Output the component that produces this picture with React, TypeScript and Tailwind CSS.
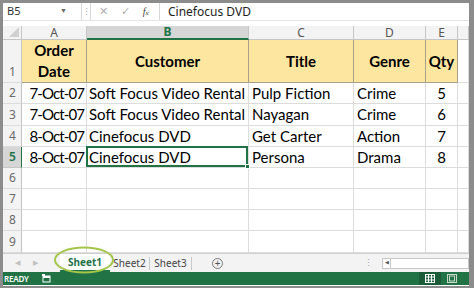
import React from "react";

const font = { fontFamily: "Lato, 'Open Sans', sans-serif" };
const ui = { fontFamily: "'Segoe UI', 'Noto Sans', 'Open Sans', sans-serif" };

const data = [
  ["7-Oct-07", "Soft Focus Video Rental", "Pulp Fiction", "Crime", "5"],
  ["7-Oct-07", "Soft Focus Video Rental", "Nayagan", "Crime", "6"],
  ["8-Oct-07", "Cinefocus DVD", "Get Carter", "Action", "7"],
  ["8-Oct-07", "Cinefocus DVD", "Persona", "Drama", "8"],
];

const cols = "grid-cols-[19px_65px_162px_105px_72px_32px_11px]";

function RowHead({ n, sel }: { n: number; sel?: boolean }) {
  return (
    <div
      className={
        "flex items-end pl-[6px] pb-[1px] text-[12px] border-r border-b " +
        (sel
          ? "bg-[#d6d6d6] text-[#217346] border-r-[#217346] border-b-[#c6c6c6] font-semibold"
          : "bg-[#f3f3f3] text-[#6a6a6a] border-r-[#c6c6c6] border-b-[#dcdcdc]")
      }
      style={ui}
    >
      {n}
    </div>
  );
}

export default function App() {
  return (
    <div className="w-[474px] h-[288px] bg-[#8c8c8c] pt-[3px] pl-[3px] pr-[5px] pb-[2px] overflow-hidden">
      <div className="w-[466px] h-[283px] bg-white flex flex-col">
        {/* Formula bar */}
        <div className="h-[18px] flex items-stretch bg-white border-b border-[#e4e4e4] text-[11px] text-[#333]" style={ui}>
          <div className="w-[79px] flex items-center justify-between pl-[4px] pr-[14px] border-r border-[#d8d8d8]">
            <span>B5</span>
            <span className="text-[7px] text-[#666]">▼</span>
          </div>
          <div className="w-[8px] flex items-center justify-center text-[#aaa] text-[9px]">⋮</div>
          <div className="w-[70px] flex items-center justify-around border-l border-r border-[#d8d8d8] text-[#b0b0b0] pl-[2px] pr-[4px]">
            <span className="text-[11px]">✕</span>
            <span className="text-[11px]">✓</span>
            <span className="italic text-[#444] text-[10px]" style={{ fontFamily: "'Liberation Serif', serif" }}>
              f<span className="text-[7px]">x</span>
            </span>
          </div>
          <div className="flex-1 flex items-center pl-[8px] text-[12px] text-[#222]">Cinefocus DVD</div>
        </div>
        <div className="h-[5px] bg-white" />

        {/* Grid */}
        <div className={"grid " + cols + " grid-rows-[14px_43px_21px_22px_21px_21px_21px_21px_21px_22px]"}>
          {/* Column header row */}
          <div className="bg-[#f3f3f3] border-r border-b border-[#c6c6c6] relative overflow-hidden">
            <div className="absolute right-[2px] bottom-[2px] w-0 h-0 border-l-[10px] border-l-transparent border-b-[10px] border-b-[#d0d0d0]" />
          </div>
          {["A", "B", "C", "D", "E", ""].map((c) => (
            <div
              key={c || "F"}
              className={
                "flex items-center justify-center text-[12px] border-r " +
                (c === "B"
                  ? "bg-[#d6d6d6] text-[#217346] font-bold border-b-2 border-b-[#217346] border-r-[#c6c6c6]"
                  : "bg-[#f3f3f3] text-[#555] border-b border-[#c6c6c6]")
              }
              style={ui}
            >
              {c}
            </div>
          ))}

          {/* Row 1 */}
          <RowHead n={1} />
          <div className="bg-[#fde6a0] border-r border-b border-[#a8a08a] flex flex-col items-center justify-center leading-[21px] font-bold text-[15px] text-black" style={font}>
            <span>Order</span>
            <span>Date</span>
          </div>
          {["Customer", "Title", "Genre", "Qty"].map((h) => (
            <div
              key={h}
              className="bg-[#fde6a0] border-r border-b border-[#a8a08a] flex items-center justify-center font-bold text-[15px] text-black"
              style={font}
            >
              {h}
            </div>
          ))}
          <div className="border-r border-b border-[#dcdcdc]" />

          {/* data rows */}
          {data.map((r, i) => (
            <React.Fragment key={i}>
              <RowHead n={i + 2} sel={i === 3} />
              <div className="border-r border-b border-[#dcdcdc] flex items-center justify-end pr-[2px] text-[15px] tracking-[-0.9px] text-black" style={font}>
                {r[0]}
              </div>
              <div className="relative border-r border-b border-[#dcdcdc] flex items-center pl-[2px] text-[15px] text-black whitespace-nowrap" style={font}>
                {r[1]}
                {i === 3 && (
                  <div className="absolute -left-[1px] -top-[1px] right-0 bottom-0 border-2 border-[#217346]">
                    <div className="absolute -right-[4px] -bottom-[4px] w-[5px] h-[5px] bg-[#217346] border border-white" />
                  </div>
                )}
              </div>
              <div className="border-r border-b border-[#dcdcdc] flex items-center pl-[3px] text-[15px] text-black" style={font}>
                {r[2]}
              </div>
              <div className="border-r border-b border-[#dcdcdc] flex items-center pl-[3px] text-[15px] text-black" style={font}>
                {r[3]}
              </div>
              <div className="border-r border-b border-[#dcdcdc] flex items-center justify-center text-[15px] text-black" style={font}>
                {r[4]}
              </div>
              <div className="border-r border-b border-[#dcdcdc]" />
            </React.Fragment>
          ))}

          {/* empty rows */}
          {[6, 7, 8, 9].map((n) => (
            <React.Fragment key={n}>
              <RowHead n={n} />
              {[0, 1, 2, 3, 4, 5].map((k) => (
                <div key={k} className="border-r border-b border-[#dcdcdc]" />
              ))}
            </React.Fragment>
          ))}
        </div>

        {/* Sheet tabs */}
        <div className="relative h-[19px] flex items-center bg-[#f3f3f3] border-t border-[#d0d0d0] text-[10px]" style={ui}>
          <span className="w-[14px] ml-[12px] text-[#c0c0c0] text-[7px]">◀</span>
          <span className="w-[14px] ml-[4px] text-[#c0c0c0] text-[7px]">▶</span>
          <div className="ml-[13px] w-[50px] h-full flex items-center justify-center bg-white text-[#217346] font-bold border-b-2 border-[#217346]">
            Sheet1
          </div>
          <div className="w-[40px] h-[13px] flex items-center justify-center text-[#444] border-r border-[#c8c8c8]">Sheet2</div>
          <div className="w-[42px] h-[13px] flex items-center justify-center text-[#444] border-r border-[#c8c8c8]">Sheet3</div>
          <div className="ml-[20px] w-[11px] h-[11px] rounded-full border border-[#777] flex items-center justify-center text-[#555] text-[10px] leading-none">
            +
          </div>
          <div className="ml-auto flex items-center h-full">
            <span className="text-[#aaa] text-[9px] mr-[9px]">⋮</span>
            <div className="w-[9px] h-[11px] border border-[#c8c8c8] bg-white flex items-center justify-center text-[5px] text-[#555]">◀</div>
            <div className="w-[78px] h-[11px] border border-l-0 border-[#c8c8c8] bg-white" />
          </div>
          <svg className="absolute left-[50px] top-[-8px]" width="62" height="28" viewBox="0 0 62 28">
            <ellipse cx="31" cy="14" rx="29" ry="12.5" fill="none" stroke="#a4c64a" strokeWidth="2" />
          </svg>
        </div>

        {/* Status bar */}
        <div className="h-[13px] bg-[#217346] flex items-center text-white" style={ui}>
          <span className="ml-[1px] text-[8px] font-semibold tracking-tight">READY</span>
          <svg className="ml-[13px]" width="9" height="9" viewBox="0 0 9 9">
            <rect x="1" y="2" width="7" height="6" fill="none" stroke="#fff" strokeWidth="1" />
            <rect x="1" y="2" width="7" height="2" fill="#fff" />
            <rect x="0" y="0" width="3" height="2" fill="#fff" />
          </svg>
          <div className="ml-auto flex items-center h-full">
            <div className="w-[22px] h-full bg-[#1a5c38] flex items-center justify-center">
              <svg width="10" height="9" viewBox="0 0 10 9">
                <rect x="0.5" y="0.5" width="9" height="8" fill="none" stroke="#fff" />
                <line x1="3.5" y1="0" x2="3.5" y2="9" stroke="#fff" />
                <line x1="6.5" y1="0" x2="6.5" y2="9" stroke="#fff" />
                <line x1="0" y1="3" x2="10" y2="3" stroke="#fff" />
                <line x1="0" y1="6" x2="10" y2="6" stroke="#fff" />
              </svg>
            </div>
            <div className="w-[22px] h-full flex items-center justify-center mr-[6px]">
              <svg width="10" height="9" viewBox="0 0 10 9">
                <rect x="0.5" y="0.5" width="9" height="8" fill="none" stroke="#c8d8c8" />
                <rect x="2.5" y="2" width="5" height="5" fill="none" stroke="#c8d8c8" />
              </svg>
            </div>
          </div>
        </div>
      </div>
    </div>
  );
}
